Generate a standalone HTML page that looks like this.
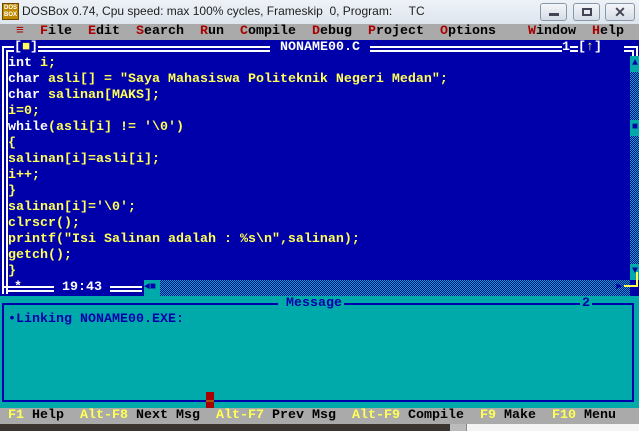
<!DOCTYPE html>
<html><head><meta charset="utf-8"><style>
*{margin:0;padding:0;box-sizing:border-box}
body{width:639px;height:431px;overflow:hidden;background:#3a3530;position:relative;font-family:"Liberation Mono","DejaVu Sans Mono",monospace}
#tb{position:absolute;left:0;top:0;width:639px;height:24px;background:linear-gradient(#eef2f7,#dde5ee);}
#tb .t{position:absolute;left:22px;top:4px;font:12px "Liberation Sans",sans-serif;color:#1e1e1e;white-space:pre}
.ico{position:absolute;left:2px;top:3px;width:17px;height:17px;background:#c08a00;border:1px solid #6a4a00;color:#fff;font:bold 6px "Liberation Sans",sans-serif;line-height:7px;text-align:center;padding-top:1px}
.btn{position:absolute;top:3px;height:18px;border:1px solid #8a97a8;border-radius:3px;background:linear-gradient(#f4f6f9,#d6dde6)}
#scr{position:absolute;left:0;top:24px;width:640px;height:400px;background:#0000aa;overflow:hidden}
.r{position:absolute;left:0;height:16px;font-size:13.33px;line-height:16px;white-space:pre;font-weight:bold}
.y{color:#ffff55}.w{color:#fff}.rd{color:#aa0000}.b{color:#0000aa}.k{color:#000}
.hl{position:absolute;background:#fff}
.bl{position:absolute;background:#0000aa}
.dith{position:absolute;background-color:#00aaaa;background-image:repeating-conic-gradient(#0000aa 0 25%,#00aaaa 0 50%);background-size:2px 2px}
</style></head><body>
<div id="tb"><div class="ico">DOS<br>BOX</div><div class="t">DOSBox 0.74, Cpu speed: max 100% cycles, Frameskip  0, Program:     TC</div>
<div class="btn" style="left:540px;width:27px"><div style="position:absolute;left:8px;top:9px;width:10px;height:3px;background:#445"></div></div>
<div class="btn" style="left:573px;width:27px"><div style="position:absolute;left:8px;top:4px;width:10px;height:8px;border:2px solid #445"></div></div>
<div class="btn" style="left:605px;width:30px;color:#445;font:bold 14px 'Liberation Sans';text-align:center;line-height:16px">✕</div>
</div>
<div id="scr">
<div class="r k" style="top:0;width:640px;height:16px;background:#aaaaaa">  <span class="rd">≡</span>  <span class="rd">F</span>ile  <span class="rd">E</span>dit  <span class="rd">S</span>earch  <span class="rd">R</span>un  <span class="rd">C</span>ompile  <span class="rd">D</span>ebug  <span class="rd">P</span>roject  <span class="rd">O</span>ptions    <span class="rd">W</span>indow  <span class="rd">H</span>elp</div>
<!-- editor frame -->
<div class="hl" style="left:2px;top:22px;width:12px;height:2px"></div><div class="hl" style="left:6px;top:26px;width:8px;height:2px"></div>
<div class="hl" style="left:2px;top:22px;width:2px;height:248px"></div><div class="hl" style="left:6px;top:26px;width:2px;height:244px"></div>
<div class="hl" style="left:38px;top:22px;width:232px;height:2px"></div><div class="hl" style="left:38px;top:26px;width:232px;height:2px"></div>
<div class="hl" style="left:370px;top:22px;width:192px;height:2px"></div><div class="hl" style="left:370px;top:26px;width:192px;height:2px"></div>
<div class="hl" style="left:570px;top:22px;width:8px;height:2px"></div><div class="hl" style="left:570px;top:26px;width:8px;height:2px"></div>
<div class="hl" style="left:624px;top:22px;width:14px;height:2px"></div><div class="hl" style="left:624px;top:26px;width:10px;height:2px"></div>
<div class="hl" style="left:636px;top:22px;width:2px;height:10px"></div><div class="hl" style="left:632px;top:26px;width:2px;height:6px"></div>
<div class="r w" style="top:16px;left:14px">[<span class="y">■</span>]</div>
<div class="r w" style="top:16px;left:272px;background:#0000aa"> NONAME00.C </div>
<div class="r w" style="top:16px;left:562px">1 [<span class="y">↑</span>]</div>
<div class="dith" style="left:630px;top:32px;width:10px;height:224px"></div>
<div class="r b" style="top:32px;left:630px;width:10px;background:#00aaaa;font-size:10px;text-align:center">▲</div>
<div class="r b" style="top:96px;left:630px;width:10px;background:#00aaaa;font-size:10px;text-align:center">■</div>
<div class="r b" style="top:240px;left:630px;width:10px;background:#00aaaa;font-size:10px;text-align:center">▼</div>
<div class="r y" style="top:32px;left:8px"><span class="w">int</span> i;</div>
<div class="r y" style="top:48px;left:8px"><span class="w">char</span> asli[] = "Saya Mahasiswa Politeknik Negeri Medan";</div>
<div class="r y" style="top:64px;left:8px"><span class="w">char</span> salinan[MAKS];</div>
<div class="r y" style="top:80px;left:8px">i=0;</div>
<div class="r y" style="top:96px;left:8px"><span class="w">while</span>(asli[i] != '\0')</div>
<div class="r y" style="top:112px;left:8px">{</div>
<div class="r y" style="top:128px;left:8px">salinan[i]=asli[i];</div>
<div class="r y" style="top:144px;left:8px">i++;</div>
<div class="r y" style="top:160px;left:8px">}</div>
<div class="r y" style="top:176px;left:8px">salinan[i]='\0';</div>
<div class="r y" style="top:192px;left:8px">clrscr();</div>
<div class="r y" style="top:208px;left:8px">printf("Isi Salinan adalah : %s\n",salinan);</div>
<div class="r y" style="top:224px;left:8px">getch();</div>
<div class="r y" style="top:240px;left:8px">}</div>
<!-- bottom frame row 16 -->
<div class="hl" style="left:2px;top:262px;width:52px;height:2px"></div><div class="hl" style="left:6px;top:266px;width:48px;height:2px"></div>
<div class="hl" style="left:110px;top:262px;width:32px;height:2px"></div><div class="hl" style="left:110px;top:266px;width:32px;height:2px"></div>
<div class="r w" style="top:256px;left:14px">*     19:43</div>
<div class="dith" style="left:144px;top:256px;width:486px;height:16px"></div>
<div class="r b" style="top:256px;left:144px;width:16px;background:#00aaaa;font-size:10px">◄■</div>
<div class="r b" style="top:256px;left:616px;width:10px;font-size:10px">►</div>
<div style="position:absolute;left:630px;top:256px;width:10px;height:16px;background:#0000aa"></div>
<div style="position:absolute;left:636px;top:248px;width:2px;height:14px;background:#ffff55"></div>
<div style="position:absolute;left:624px;top:261px;width:14px;height:2px;background:#ffff55"></div>
<!-- message window -->
<div style="position:absolute;left:0;top:272px;width:640px;height:112px;background:#00aaaa"></div>
<div class="bl" style="left:2px;top:279px;width:276px;height:2px"></div>
<div class="bl" style="left:344px;top:279px;width:236px;height:2px"></div>
<div class="bl" style="left:592px;top:279px;width:42px;height:2px"></div>
<div class="bl" style="left:2px;top:279px;width:2px;height:98px"></div>
<div class="bl" style="left:632px;top:279px;width:2px;height:98px"></div>
<div class="bl" style="left:2px;top:376px;width:632px;height:2px"></div>
<div class="r b" style="top:272px;left:278px"> Message</div>
<div class="r b" style="top:272px;left:582px">2</div>
<div class="r b" style="top:288px;left:8px">•Linking NONAME00.EXE:</div>
<div style="position:absolute;left:206px;top:368px;width:8px;height:17px;background:#aa0000"></div>
<div style="position:absolute;left:206px;top:376px;width:8px;height:2px;background:#aa5500"></div>
<div class="r k" style="top:384px;width:640px;background:#aaaaaa;height:16px"> <span class="y">F1</span> Help  <span class="y">Alt-F8</span> Next Msg  <span class="y">Alt-F7</span> Prev Msg  <span class="y">Alt-F9</span> Compile  <span class="y">F9</span> Make  <span class="y">F10</span> Menu</div>
</div>
<div style="position:absolute;left:450px;top:424px;width:16px;height:7px;background:#bbb"></div>
<div style="position:absolute;left:466px;top:424px;width:173px;height:7px;background:#f4f4f4;border-left:1px solid #888"></div>
</body></html>
